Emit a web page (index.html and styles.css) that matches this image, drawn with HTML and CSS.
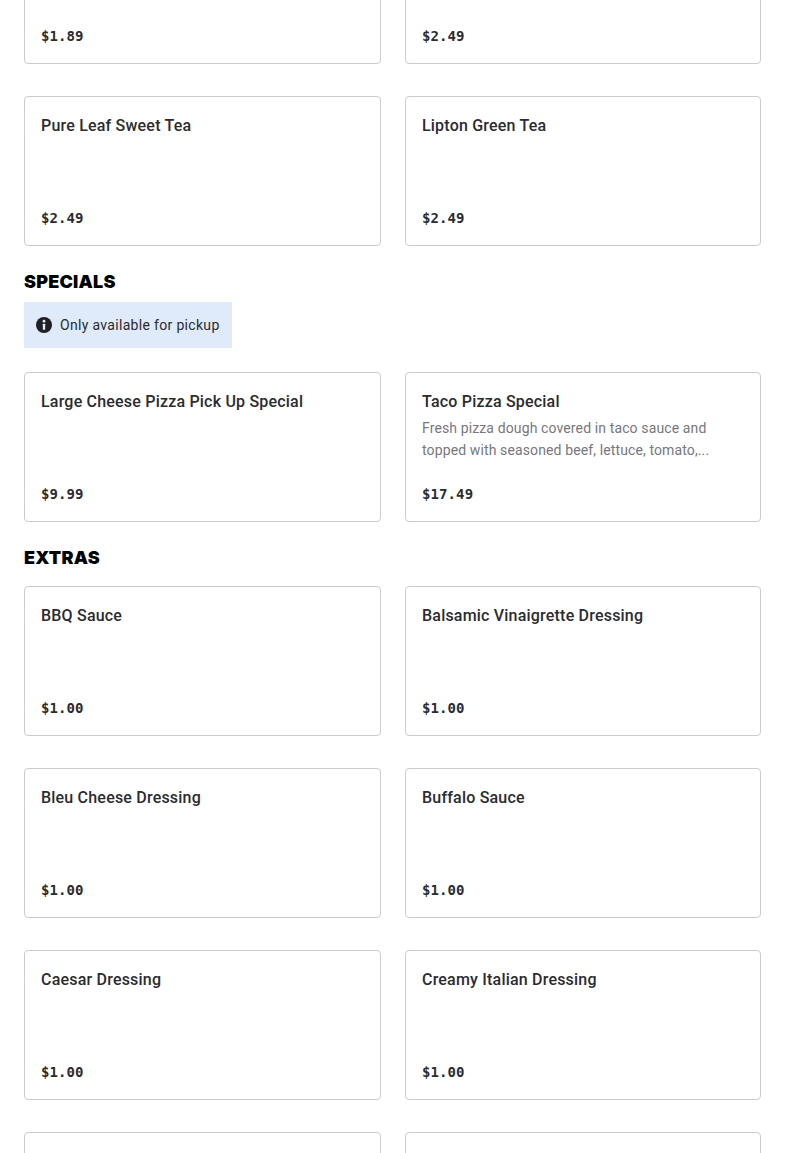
FILE: index.html
```html
<!DOCTYPE html>
<html lang="en">
<head>
  <title>Menu</title>
  <link rel="stylesheet" href="styles.css">
</head>
<body>

  <div class="menu">

    <!-- Drinks (scrolled past the top) -->
    <section class="section section-scrolled">
      <div class="items">
        <div class="item">
          <div class="item-price">$1.89</div>
        </div>
        <div class="item">
          <div class="item-price">$2.49</div>
        </div>
        <div class="item">
          <div class="item-name">Pure Leaf Sweet Tea</div>
          <div class="item-price">$2.49</div>
        </div>
        <div class="item">
          <div class="item-name">Lipton Green Tea</div>
          <div class="item-price">$2.49</div>
        </div>
      </div>
    </section>

    <!-- Specials -->
    <section class="section">
      <h2>SPECIALS</h2>
      <div class="notice">
        <svg class="notice-icon" viewBox="0 0 16 16">
          <circle cx="8" cy="8" r="8" fill="#1f1f24"/>
          <circle cx="8" cy="4.2" r="1.4" fill="#dfeafa"/>
          <rect x="6.8" y="6.8" width="2.4" height="6" rx="0.4" fill="#dfeafa"/>
        </svg>
        <span>Only available for pickup</span>
      </div>
      <div class="items">
        <div class="item">
          <div class="item-name">Large Cheese Pizza Pick Up Special</div>
          <div class="item-price">$9.99</div>
        </div>
        <div class="item">
          <div class="item-name">Taco Pizza Special</div>
          <div class="item-desc">Fresh pizza dough covered in taco sauce and topped with seasoned beef, lettuce, tomato,...</div>
          <div class="item-price">$17.49</div>
        </div>
      </div>
    </section>

    <!-- Extras -->
    <section class="section">
      <h2 class="heading-gap">EXTRAS</h2>
      <div class="items">
        <div class="item">
          <div class="item-name">BBQ Sauce</div>
          <div class="item-price">$1.00</div>
        </div>
        <div class="item">
          <div class="item-name">Balsamic Vinaigrette Dressing</div>
          <div class="item-price">$1.00</div>
        </div>
        <div class="item">
          <div class="item-name">Bleu Cheese Dressing</div>
          <div class="item-price">$1.00</div>
        </div>
        <div class="item">
          <div class="item-name">Buffalo Sauce</div>
          <div class="item-price">$1.00</div>
        </div>
        <div class="item">
          <div class="item-name">Caesar Dressing</div>
          <div class="item-price">$1.00</div>
        </div>
        <div class="item">
          <div class="item-name">Creamy Italian Dressing</div>
          <div class="item-price">$1.00</div>
        </div>
        <div class="item"></div>
        <div class="item"></div>
      </div>
    </section>

  </div>

</body>
</html>
```

FILE: styles.css
```css
html, body {
  height: 1153px;
  overflow: hidden;
}

body {
  margin: 0;
  background: #fff;
  color: #2b2b30;
  font-family: "Roboto", "Liberation Sans", sans-serif;
}

.menu {
  padding: 0 24px;
  margin-top: -86px;
}

.section-scrolled {
  margin-bottom: 24px;
}

h2 {
  margin: 0 0 8px;
  height: 24px;
  line-height: 24px;
  font-family: "Inter", "Liberation Sans", sans-serif;
  font-size: 18px;
  font-weight: 900;
  letter-spacing: 0.2px;
  color: #000;
}

.heading-gap {
  margin-bottom: 16px;
}

.notice {
  display: inline-flex;
  align-items: center;
  gap: 8px;
  height: 46px;
  padding: 0 12px;
  margin-bottom: 24px;
  background: #dfeafa;
  font-size: 14px;
  letter-spacing: 0.32px;
  vertical-align: top;
}

.notice-icon {
  width: 16px;
  height: 16px;
}

.items {
  display: grid;
  grid-template-columns: 357px 1fr;
  column-gap: 24px;
  row-gap: 32px;
  margin-bottom: 24px;
}

.item {
  height: 150px;
  box-sizing: border-box;
  padding: 16px;
  border: 1px solid #ccc;
  border-radius: 4px;
  display: flex;
  flex-direction: column;
}

.item-name {
  margin-top: 1px;
  font-size: 16px;
  line-height: 24px;
  font-weight: 500;
  letter-spacing: 0.2px;
}

.item-desc {
  margin-top: 3px;
  font-size: 14px;
  line-height: 22px;
  letter-spacing: 0.12px;
  color: #77777c;
  display: -webkit-box;
  -webkit-line-clamp: 2;
  -webkit-box-orient: vertical;
  overflow: hidden;
}

.item-price {
  margin-top: auto;
  margin-bottom: 1px;
  font-family: "DejaVu Sans Mono", monospace;
  font-size: 14px;
  line-height: 20px;
  font-weight: 700;
  letter-spacing: 0.1px;
}
```
